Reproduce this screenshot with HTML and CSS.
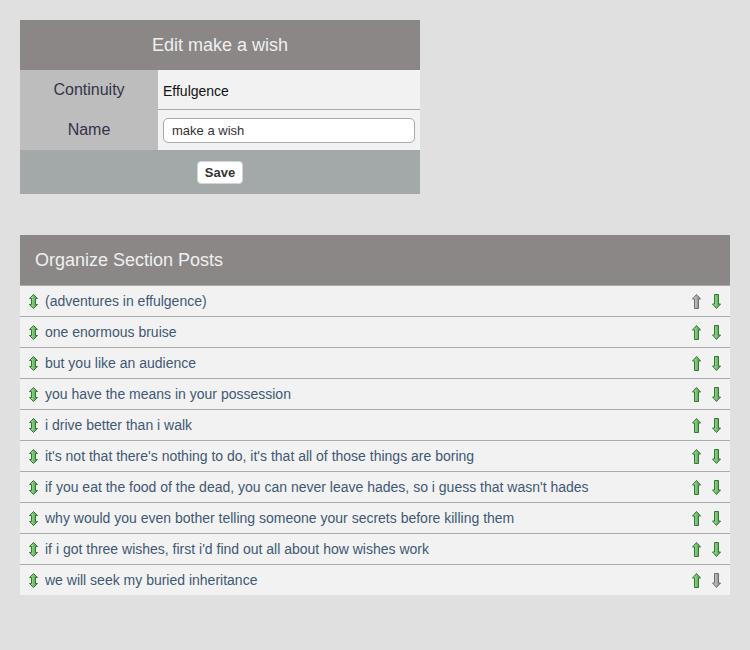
FILE: index.html
```html
<!DOCTYPE html>
<html>
<head>
<meta charset="utf-8">
<link rel="stylesheet" href="styles.css">
</head>
<body>
<svg width="0" height="0" class="defs">
  <defs>
    <linearGradient id="g" x1="0" x2="1" y1="0" y2="0">
      <stop offset="0" stop-color="#b6e6b0"/>
      <stop offset="1" stop-color="#3f9a3c"/>
    </linearGradient>
    <linearGradient id="gr" x1="0" x2="1" y1="0" y2="0">
      <stop offset="0" stop-color="#e0e0e0"/>
      <stop offset="1" stop-color="#7a7a7a"/>
    </linearGradient>
    <symbol id="up" viewBox="0 0 9 15">
      <path d="M4.5 0.5 L8.5 5 L6.5 5 L6.5 14.5 L2.5 14.5 L2.5 5 L0.5 5 Z"/>
    </symbol>
    <symbol id="down" viewBox="0 0 9 15">
      <path d="M4.5 14.5 L8.5 10 L6.5 10 L6.5 0.5 L2.5 0.5 L2.5 10 L0.5 10 Z"/>
    </symbol>
    <symbol id="both" viewBox="0 0 9 15">
      <path d="M4.5 0.5 L8.5 4.5 L6.5 4.5 L6.5 10.5 L8.5 10.5 L4.5 14.5 L0.5 10.5 L2.5 10.5 L2.5 4.5 L0.5 4.5 Z"/>
    </symbol>
  </defs>
</svg>

<div class="edit">
  <div class="edit-head">Edit make a wish</div>
  <div class="label">Continuity</div>
  <div class="value first">Effulgence</div>
  <div class="label">Name</div>
  <div class="value"><input class="name-input" type="text" value="make a wish"></div>
  <div class="foot"><button class="save">Save</button></div>
</div>

<div class="posts">
  <div class="posts-head">Organize Section Posts</div>
  <div class="post">
    <svg class="ic both"><use href="#both"/></svg>
    <span class="title">(adventures in effulgence)</span>
    <svg class="ic off"><use href="#up"/></svg><svg class="ic on"><use href="#down"/></svg>
  </div>
  <div class="post">
    <svg class="ic both"><use href="#both"/></svg>
    <span class="title">one enormous bruise</span>
    <svg class="ic on"><use href="#up"/></svg><svg class="ic on"><use href="#down"/></svg>
  </div>
  <div class="post">
    <svg class="ic both"><use href="#both"/></svg>
    <span class="title">but you like an audience</span>
    <svg class="ic on"><use href="#up"/></svg><svg class="ic on"><use href="#down"/></svg>
  </div>
  <div class="post">
    <svg class="ic both"><use href="#both"/></svg>
    <span class="title">you have the means in your possession</span>
    <svg class="ic on"><use href="#up"/></svg><svg class="ic on"><use href="#down"/></svg>
  </div>
  <div class="post">
    <svg class="ic both"><use href="#both"/></svg>
    <span class="title">i drive better than i walk</span>
    <svg class="ic on"><use href="#up"/></svg><svg class="ic on"><use href="#down"/></svg>
  </div>
  <div class="post">
    <svg class="ic both"><use href="#both"/></svg>
    <span class="title">it's not that there's nothing to do, it's that all of those things are boring</span>
    <svg class="ic on"><use href="#up"/></svg><svg class="ic on"><use href="#down"/></svg>
  </div>
  <div class="post">
    <svg class="ic both"><use href="#both"/></svg>
    <span class="title">if you eat the food of the dead, you can never leave hades, so i guess that wasn't hades</span>
    <svg class="ic on"><use href="#up"/></svg><svg class="ic on"><use href="#down"/></svg>
  </div>
  <div class="post">
    <svg class="ic both"><use href="#both"/></svg>
    <span class="title">why would you even bother telling someone your secrets before killing them</span>
    <svg class="ic on"><use href="#up"/></svg><svg class="ic on"><use href="#down"/></svg>
  </div>
  <div class="post">
    <svg class="ic both"><use href="#both"/></svg>
    <span class="title">if i got three wishes, first i'd find out all about how wishes work</span>
    <svg class="ic on"><use href="#up"/></svg><svg class="ic on"><use href="#down"/></svg>
  </div>
  <div class="post">
    <svg class="ic both"><use href="#both"/></svg>
    <span class="title">we will seek my buried inheritance</span>
    <svg class="ic on"><use href="#up"/></svg><svg class="ic off"><use href="#down"/></svg>
  </div>
</div>
</body>
</html>
```

FILE: styles.css
```css
html, body {
  margin: 0;
  padding: 0;
  background: #e0e0e0;
}
body {
  padding: 20px;
  font-family: "Liberation Sans", Arial, sans-serif;
}
.defs {
  position: absolute;
  width: 0;
  height: 0;
}
.edit {
  width: 400px;
  display: grid;
  grid-template-columns: 138px 1fr;
  grid-template-rows: 50px 40px 40px 44px;
}
.edit-head {
  grid-column: 1 / 3;
  background: #8b8787;
  color: #efefef;
  font-size: 18px;
  display: flex;
  align-items: center;
  justify-content: center;
}
.label {
  background: #bdbdbd;
  color: #343448;
  font-size: 16px;
  display: flex;
  align-items: center;
  justify-content: center;
}
.value {
  background: #f2f2f2;
  color: #111;
  font-size: 14px;
  padding: 0 5px;
  display: flex;
  align-items: center;
}
.value.first {
  border-bottom: 1px solid #aaaaaa;
  padding-top: 2px;
}
.name-input {
  box-sizing: border-box;
  width: 100%;
  height: 25px;
  border: 1px solid #a9a9a9;
  border-radius: 5px;
  padding: 0 8px;
  font-family: "Liberation Sans", Arial, sans-serif;
  font-size: 13px;
  color: #333;
  background: #fff;
}
.foot {
  grid-column: 1 / 3;
  background: #a3a9a8;
  display: flex;
  align-items: center;
  justify-content: center;
}
.save {
  width: 46px;
  height: 23px;
  background: #fff;
  border: 1px solid #d4d4d4;
  border-radius: 4px;
  font-family: "Liberation Sans", Arial, sans-serif;
  font-weight: bold;
  font-size: 13px;
  color: #333;
  padding: 0;
}
.posts {
  width: 710px;
  margin-top: 41px;
}
.posts-head {
  height: 50px;
  background: #8b8787;
  color: #efefef;
  font-size: 18px;
  padding-left: 15px;
  display: flex;
  align-items: center;
}
.post {
  height: 30px;
  border-top: 1px solid #aaaaaa;
  background: #f2f2f2;
  display: flex;
  align-items: center;
  padding: 0 9px 0 9px;
}
.title {
  flex: 1;
  color: #3f5874;
  font-size: 14px;
  margin-left: 7px;
}
.ic {
  width: 9px;
  height: 15px;
  display: block;
  stroke-width: 1;
  stroke-linejoin: miter;
}
.ic + .ic {
  margin-left: 11px;
}
.both, .on {
  fill: url(#g);
  stroke: #2f7a2e;
}
.off {
  fill: url(#gr);
  stroke: #6d6d6d;
}
```
